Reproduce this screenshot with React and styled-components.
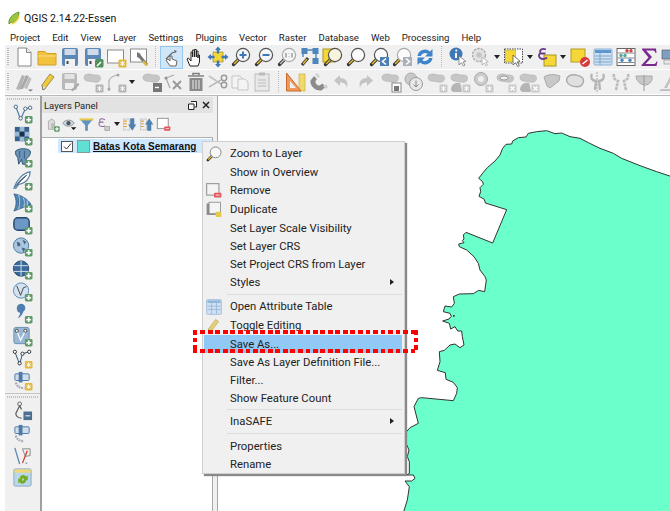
import React from 'react';
import styled, { createGlobalStyle } from 'styled-components';

const Global = createGlobalStyle`
  html, body { margin: 0; padding: 0; background: #fff; }
  body { font-family: Roboto, "Noto Sans", sans-serif; color: #222; }
`

/* ---------- small svg pieces ---------- */
const Glyph = styled.svg`
  display: block;
  flex: none;
`
const Ico = ({ size = 22, children }) => (
  <Glyph width={size} height={size} viewBox="0 0 22 22">{children}</Glyph>
)

const PlusBadge = () => (
  <g>
    <rect x="13.5" y="13.5" width="8" height="8" rx="1.5" fill="#5f9a68" />
    <path d="M17.5 15v5M15 17.5h5" stroke="#fff" strokeWidth="1.7" />
  </g>
)
const StarBadge = ({ c = '#e2b93b' }) => (
  <g>
    <rect x="13.5" y="13.5" width="8" height="8" rx="1.2" fill={c} />
    <path d="M17.5 15v5M15.3 16.2l4.4 2.6M15.3 18.8l4.4-2.6" stroke="#fff" strokeWidth="1" />
  </g>
)
const Lens = ({ children, ring = '#555', glass = '#f4f6f8', handle = '#e3b92f' }) => (
  <g>
    <path d="M8.5 13.5L3.5 18.5" stroke="#333" strokeWidth="3.2" strokeLinecap="round" />
    <path d="M8.5 13.5L4.5 17.5" stroke={handle} strokeWidth="1.6" strokeLinecap="round" />
    <circle cx="13" cy="9" r="6.6" fill={glass} stroke={ring} strokeWidth="1.2" />
    {children}
  </g>
)
const Blob = ({ c = '#c6c6c6' }) => (
  <path d="M2 6.5C2 3 7 2.5 10 3.5S18 3 18.5 6.5 16 12 12 11 2 11 2 6.5z" fill={c} stroke="#b0b0b0" strokeWidth=".6" />
)
const Floppy = ({ c = '#5c88b8', paper = '#cfdbe8' }) => (
  <g>
    <rect x="3" y="2" width="16" height="18" rx="2" fill={c} />
    <rect x="5.5" y="3" width="11" height="6" fill={paper} />
    <rect x="6" y="13" width="10" height="7" fill="#f2f2f2" />
    <rect x="7.5" y="15" width="2" height="3" fill="#444" />
  </g>
)
const DisabledFloppy = () => (
  <g>
    <rect x="3" y="2" width="15" height="17" rx="2" fill="#b9b9b9" />
    <rect x="5.5" y="3" width="10" height="5" fill="#e3e3e3" />
    <rect x="6" y="12" width="9" height="6" fill="#efefef" />
    <path d="M12 19l7-7 1.5 1.5-7 7z" fill="#a8a8a8" />
  </g>
)
const ArrowDot = ({ x, y, r }) => (
  <path d="M0-3.5L3 0H1.2V3.5H-1.2V0H-3z" transform={`translate(${x} ${y}) rotate(${r})`} fill="#3f78b5" />
)

const icons = {
  newFile: <><path d="M5 2h8.5L18 6.5V20H5z" fill="#fff" stroke="#888" /><path d="M13.5 2v4.5H18" fill="#eee" stroke="#888" /></>,
  open: <><path d="M2 5.500h7l2 2h9V19H2z" fill="#f2c23e" stroke="#cf9f23" /><path d="M2 10h18" stroke="#f8dd83" /></>,
  save: <Floppy />,
  saveAs: <><Floppy /><rect x="13" y="13" width="8.5" height="8.5" rx="1.5" fill="#4f8f58" /><path d="M15 20l4-4" stroke="#fff" strokeWidth="1.6" /></>,
  layout: <><rect x="2.5" y="4" width="16" height="13" fill="#fff" stroke="#8a8a8a" /><StarBadge /></>,
  manager: <><rect x="2.5" y="3" width="16" height="13" fill="#fff" stroke="#8a8a8a" /><path d="M9 6l3 1.5 1 2L20 18l-2 2-7-8-2-1z" fill="#777" /><path d="M15 15l4 4.5" stroke="#e3b92f" strokeWidth="2" /></>,
  panSelect: <><path d="M5 13l6-6 3-1" fill="none" stroke="#666" strokeWidth="1.2" /><path d="M13 4l3 1-2 2z" fill="#666" /><path d="M9 20l-4-6 2-1 2 2v-5h2v3l5 2-1 5z" fill="#fff" stroke="#666" /></>,
  hand: <path d="M6 20l-3-7 1.5-1 2.5 3V6h1.700v5-7h1.800v7-7.500h1.800V11V5h1.700v7-3h1.500v7l-1.500 4z" fill="#fff" stroke="#222" strokeWidth="1" />,
  panTo: <><rect x="6" y="6" width="10" height="10" fill="#f5d838" stroke="#8a7a20" strokeWidth=".6" /><ArrowDot x="11" y="4" r="0" /><ArrowDot x="11" y="18" r="180" /><ArrowDot x="4" y="11" r="270" /><ArrowDot x="18" y="11" r="90" /></>,
  zoomIn: <Lens><path d="M13 5.5v7M9.500 9h7" stroke="#3f78b5" strokeWidth="2" /></Lens>,
  zoomOut: <Lens><path d="M9.5 9h7" stroke="#3f78b5" strokeWidth="2" /></Lens>,
  zoomOne: <Lens ring="#aaa" handle="#bbb"><path d="M10 7v4.5M16 7v4.5M13 7.5v.5M13 10v.5" stroke="#888" strokeWidth="1.2" /></Lens>,
  zoomFull: <><rect x="2.5" y="2" width="6" height="6" fill="#4d86bd" /><rect x="13.5" y="2" width="6" height="6" fill="#4d86bd" /><rect x="13.5" y="12" width="6" height="6" fill="#4d86bd" /><path d="M7 4h8M17 7v6M4 7v4" stroke="#4d86bd" strokeWidth="1.4" /><path d="M9 12l-6 7" stroke="#333" strokeWidth="3" /><path d="M8 13l-4 5" stroke="#e3b92f" strokeWidth="1.4" /></>,
  zoomSel: <><rect x="1" y="3" width="12" height="13" fill="#f5d838" stroke="#a89520" /><Lens glass="#f7f3dc" /></>,
  zoomLayer: <Lens glass="#fbfbfb" />,
  zoomLast: <><Lens glass="#fbfbfb" /><rect x="12" y="11" width="9" height="9" fill="#4d7fb0" /><path d="M18 12.5l-3.5 3 3.5 3" fill="none" stroke="#fff" strokeWidth="1.6" /></>,
  zoomNext: <><Lens glass="#fbfbfb" ring="#aaa" /><rect x="12" y="11" width="9" height="9" fill="#aab1b8" /><path d="M15 12.5l3.5 3-3.5 3" fill="none" stroke="#fff" strokeWidth="1.6" /></>,
  refresh: <><path d="M3.5 10A7.500 7.500 0 0 1 16 5.500L18.500 3v7.500H11l2.700-2.700A4.500 4.500 0 0 0 6.800 10z" fill="#3d84cc" /><path d="M18.500 12A7.500 7.500 0 0 1 6 16.500L3.500 19v-7.500H11l-2.700 2.700A4.500 4.500 0 0 0 15.200 12z" fill="#3d84cc" /></>,
  identify: <><circle cx="9" cy="8" r="6.5" fill="#3f78b5" /><path d="M9 7v5" stroke="#fff" strokeWidth="2" /><circle cx="9.3" cy="4.6" r="1.1" fill="#fff" /><path d="M12 10v9l2.500-2.300 2 3.300 1.500-1-2-3 3-.5z" fill="#fff" stroke="#777" strokeWidth=".8" /></>,
  action: <><circle cx="9" cy="9" r="6.5" fill="#e3e3e3" stroke="#aaa" strokeWidth="1.4" strokeDasharray="2.5 1" /><circle cx="9" cy="9" r="2.8" fill="#c5c5c5" /><path d="M12 11v8l2.300-2 2 3 1.300-1-2-2.800 2.700-.5z" fill="#fff" stroke="#aaa" strokeWidth=".8" /></>,
  select: <><rect x="1.5" y="3" width="18" height="14" fill="#fff" stroke="#444" strokeDasharray="1.5 1" /><rect x="2.5" y="4" width="10" height="12" fill="#f5d838" stroke="#b29c20" strokeWidth=".5" /><path d="M10 9v10l2.500-2.300 2.200 3.800 1.600-1-2.200-3.500 3-.7z" fill="#fff" stroke="#555" strokeWidth=".8" /></>,
  expr: <><rect x="8" y="9" width="12" height="11" fill="#f5d838" stroke="#a89520" /><path d="M10 3.500C6 2 3 4 4.500 7 2 8.500 2.500 13 7 13c1.500 0 3-.5 4-1.500M4.500 7.500h5" fill="none" stroke="#6a3a90" strokeWidth="1.8" /></>,
  deselect: <><rect x="2" y="3" width="14" height="13" fill="#f5d838" stroke="#b29c20" /><circle cx="16" cy="16" r="5" fill="#d83a3a" /><path d="M13.500 18l5-4" stroke="#fff" strokeWidth="1.5" /></>,
  attrTable: <><rect x="2" y="3" width="18" height="16" rx="1" fill="#cfe0f2" stroke="#8bb0d3" /><rect x="3" y="4" width="16" height="3" fill="#5d97cf" /><path d="M3 10h16M3 13h16M3 16h16M8 7v12" stroke="#7da5cc" /></>,
  calc: <><rect x="2" y="2.5" width="18" height="17" fill="#fff" stroke="#666" /><path d="M2.500 7h17M2.500 12h17M2.500 16.500h17" stroke="#888" /><circle cx="12" cy="4.8" r="1.7" fill="#c44" /><circle cx="16" cy="4.8" r="1.7" fill="#c44" /><circle cx="6" cy="9.5" r="1.7" fill="#5a9" /><circle cx="10" cy="9.5" r="1.7" fill="#5a9" /><circle cx="15" cy="14.3" r="1.7" fill="#48c" /><circle cx="7" cy="14.3" r="1.7" fill="#48c" /></>,
  sigma: <path d="M4 2.500h14l.5 4.500h-1C17 5 16 4.500 14 4.500H8l6 6.500-6.500 7H15c2 0 3-.5 3.500-2.500h1L18.500 20H3.500v-1l7-7.500-6.500-8z" fill="#7a2a8c" />,
  ruler: <><rect x="1" y="4" width="20" height="9" fill="#7e9fc0" stroke="#555" strokeWidth=".6" /><rect x="3" y="14" width="16" height="4" fill="#e8e8e8" stroke="#888" strokeWidth=".6" /></>,

  pencils: <><path d="M3 18L9 4l3 1-5 14z" fill="#b3b3b3" /><path d="M7 18L13 4l3 1.500-6 12.500z" fill="#a8a8a8" /><path d="M11 17l5-11 2.500 1.500L14 18z" fill="#bdbdbd" /><path d="M15 18.500h5l-2.500 2z" fill="#777" /></>,
  pencil: <><path d="M7 19l-1-5L14 3l4 3-8.500 11z" fill="#efc93f" stroke="#8c7a30" strokeWidth=".8" /><path d="M6 14l1 5 3-2" fill="#e8e0c0" stroke="#555" strokeWidth=".6" /></>,
  saveGray: <DisabledFloppy />,
  addFeature: <><Blob /><StarBadge c="#b5b5b5" /></>,
  node: <><path d="M4 20V11q0-5 8-7" fill="none" stroke="#b0b0b0" strokeWidth="1.2" /><circle cx="4" cy="18" r="1.5" fill="#a5a5a5" /><circle cx="13" cy="4" r="1.5" fill="#a5a5a5" /><StarBadge c="#b5b5b5" /></>,
  moveFeature: <><Blob /><rect x="12" y="12" width="9" height="9" fill="#777" /><path d="M14 16.500h4" stroke="#fff" strokeWidth="1.4" /></>,
  nodeTool: <><path d="M3 7l8-3M3 7l4 10" fill="none" stroke="#aaa" strokeWidth="1.3" /><circle cx="3" cy="7" r="1.6" fill="#999" /><path d="M10 10l8 8M18 10l-8 8" stroke="#999" strokeWidth="2" /></>,
  trash: <><path d="M3 5h16M8 4V2.500h6V4" stroke="#808080" strokeWidth="1.6" fill="none" /><path d="M4.500 7h13v13h-13z" fill="#8a8a8a" /><path d="M8 9v9M11 9v9M14 9v9" stroke="#ddd" strokeWidth="1.2" /></>,
  cut: <><path d="M2 5l12 8M2 16l12-7" stroke="#aaa" strokeWidth="1.3" /><path d="M2 5l9 6" stroke="#c8c8c8" strokeWidth="2" /><circle cx="17" cy="7" r="2.7" fill="none" stroke="#999" strokeWidth="1.4" /><circle cx="17" cy="14" r="2.7" fill="none" stroke="#999" strokeWidth="1.4" /></>,
  copy: <><path d="M3 5h8l2 2v10H3z" fill="#f4f4f4" stroke="#c5c5c5" /><path d="M9 8h7l3 3v8H9z" fill="#f4f4f4" stroke="#c5c5c5" /></>,
  paste: <><rect x="4" y="3" width="14" height="17" fill="#e8e8e8" stroke="#bbb" /><rect x="8" y="1.5" width="6" height="3" fill="#bbb" /><path d="M7 9h8M7 12h8M7 15h8" stroke="#bbb" /></>,
  triangle: <><rect x="14" y="3" width="6" height="17" fill="#f0d96b" stroke="#c9a92f" strokeWidth=".6" /><path d="M1.500 2L16 20H1.500z" fill="#f0995a" stroke="#c76a2a" /><path d="M5 10v7h6z" fill="#f0f0f0" /></>,
  magnet: <><path d="M6 5L2.500 9.500c-1 5 5 11 11 10l4-3.500-3-3.500-3 2c-2 0-4.500-2-4-4.500l1.500-2z" fill="#8c8c8c" /><path d="M7 3.500l3 3.500 2-1.500-3-3.500zM18 13l-3 2 3 3 2-2z" fill="#d0d0d0" /></>,
  undo: <path d="M9 4L3 9.500 9 15v-3.500c4 0 6 1.500 7 5 1.500-5-.5-9.500-7-9.500z" fill="#c4c4c4" />,
  redo: <path d="M13 4l6 5.500L13 15v-3.500c-4 0-6 1.500-7 5-1.500-5 .5-9.500 7-9.500z" fill="#c4c4c4" />,
  blobDoc: <><Blob /><rect x="12" y="12" width="9" height="9" fill="#fff" stroke="#888" /><rect x="14" y="15" width="5" height="5" fill="#777" /></>,
  rotate: <><circle cx="8" cy="8" r="6" fill="#c9c9c9" stroke="#aaa" /><circle cx="13" cy="13" r="6.5" fill="#e8e8e8" stroke="#999" /><path d="M13 9.500v6M10.500 13.500l2.500 2.500 2.500-2.500" fill="none" stroke="#888" /></>,
  blobStar: <><Blob /><StarBadge c="#c9c9c9" /></>,
  twoBlobStar: <><Blob /><path d="M2 19c0-6 5-8 9-7l1 3 1 6H4z" fill="#b5b5b5" /><StarBadge c="#c9c9c9" /></>,
  ringStar: <><circle cx="9" cy="8" r="6.5" fill="#ccc" stroke="#aaa" /><circle cx="9" cy="8" r="3" fill="#eee" /><StarBadge c="#c9c9c9" /></>,
  blobHoleX: <><Blob /><ellipse cx="9" cy="7" rx="4" ry="2" fill="#f0f0f0" stroke="#999" /><rect x="13.500" y="13.500" width="8" height="8" fill="#ccc" /><path d="M15.500 15.500l4 4M19.500 15.500l-4 4" stroke="#fff" strokeWidth="1.4" /></>,
  twoBlobX: <><Blob /><path d="M2 19c0-6 5-8 9-7l1 3 1 6H4z" fill="#b5b5b5" /><rect x="13.500" y="13.500" width="8" height="8" fill="#ccc" /><path d="M15.500 15.500l4 4M19.500 15.500l-4 4" stroke="#fff" strokeWidth="1.4" /></>,
  part: <path d="M3 6c4-3 10-3 16-1l-1 5-9 7-3-2z" fill="#c8c8c8" stroke="#aaa" />,
  fill: <path d="M3 11c-2-6 5-8 9-7s9 2 7 8-13 4-16-1z" fill="#e0e0e0" stroke="#aaa" strokeWidth="1.4" />,
  split: <><path d="M5 3c-2 3 0 7 4 7l-1 9M16 3c2 3 0 7-4 7l1 9" fill="none" stroke="#b5b5b5" strokeWidth="2.4" /><path d="M10 1v20" stroke="#aaa" strokeDasharray="2 1" /></>,
  splitParts: <><path d="M4 3c-1 4 1 6 4 7l-2 9M18 3c1 4-1 6-4 7l2 9" fill="none" stroke="#bbb" strokeWidth="2.6" strokeDasharray="3 .8" /></>,
  merge: <><path d="M3 5h16c1 4-2 9-7 9s-9-5-9-9z" fill="#c8c8c8" stroke="#aaa" /><path d="M11 4v16" stroke="#999" /></>,
  mergeAttr: <path d="M5 18h14v2H3zM8 17l7-13 2 1-6 12z" fill="#c2c2c2" />,
}

const sideIcons = {
  vector: <><path d="M4 4l5 13 5-11 5-1" fill="none" stroke="#4a7aa8" strokeWidth="1.2" /><circle cx="4" cy="4" r="1.8" fill="#fff" stroke="#44617e" /><circle cx="9" cy="16" r="1.8" fill="#fff" stroke="#44617e" /><circle cx="14" cy="6" r="1.8" fill="#fff" stroke="#44617e" /><circle cx="19" cy="5" r="1.8" fill="#fff" stroke="#44617e" /><PlusBadge /></>,
  raster: <><rect x="3" y="2" width="15" height="15" fill="#35618d" /><path d="M8 2h5v5H8zM13 7h5v5h-5zM3 7h5v5H3zM8 12h5v5H8z" fill="#9bb7d1" /><path d="M8 7h5v5H8z" fill="#16324f" /><PlusBadge /></>,
  postgis: <><path d="M4 4c4-3 12-3 15 0 1 3-1 7-4 8l-1 6h-3l-1-5-3 5-1-7c-2-2-3-5-2-7z" fill="#6a93b8" stroke="#2e5170" /><path d="M8 4v7M13 4v8" stroke="#2e5170" strokeWidth=".8" /><PlusBadge /></>,
  feather: <><path d="M2 19C5 10 12 3 19 2c0 6-4 12-12 13l-3 4z" fill="#fff" stroke="#4f7aa5" strokeWidth="1.2" /><path d="M3 18C7 12 11 8 16 5" stroke="#4f7aa5" /><PlusBadge /></>,
  sail: <><path d="M2 2c8 1 15 6 18 11L2 20c3-6 3-12 0-18z" fill="#4f86b8" stroke="#2d5a85" strokeWidth=".8" /><path d="M7 3c1 4 1 10 0 15M12 6c1 3 1 7 .5 10M16 9v5" stroke="#d0e0ee" /><PlusBadge /></>,
  rect: <><rect x="2" y="4" width="16" height="13" rx="4" fill="#6d97c5" stroke="#24476c" strokeWidth="1.5" /><PlusBadge /></>,
  wms: <><circle cx="9.5" cy="10" r="8" fill="#a9c5df" stroke="#4f7aa5" /><path d="M5 6l3 1 1 3-3 1zM11 4l4 2-2 3zM10 12l4 1-2 4z" fill="#46627f" /><PlusBadge /></>,
  wcs: <><circle cx="9.5" cy="10" r="8" fill="#3a6a9a" stroke="#22486d" /><path d="M2 7h15M2 13h15M9.500 2v16" stroke="#d8e5f0" /><PlusBadge /></>,
  wfs: <><circle cx="9.5" cy="10" r="8" fill="#d3e2f0" stroke="#5c89b5" /><path d="M5 5l4 10 3-8 3-1" fill="none" stroke="#444" /><PlusBadge /></>,
  comma: <><path d="M5 5a4.500 4.500 0 1 1 7 4c-1 3-3 6-6 7 2-3 3-5 2-6-2 0-3-2-3-5z" fill="#4f7eb0" /><PlusBadge /></>,
  virtual: <><rect x="2" y="1.5" width="16" height="17" rx="2" fill="#9ab8d4" stroke="#6a8eb0" /><path d="M5 5l4 10 5-10" fill="none" stroke="#fff" strokeWidth="1.3" /><circle cx="5" cy="5" r="1.6" fill="#fff" stroke="#444" /><circle cx="14" cy="5" r="1.6" fill="#fff" stroke="#444" /><PlusBadge /></>,
  newLayer: <><path d="M3 4l5 13 3-11 7-2" fill="none" stroke="#44617e" strokeWidth="1.1" /><circle cx="3" cy="4" r="1.7" fill="#fff" stroke="#333" /><circle cx="8" cy="16" r="1.7" fill="#fff" stroke="#333" /><circle cx="11" cy="6" r="1.7" fill="#fff" stroke="#333" /><circle cx="18" cy="4" r="1.7" fill="#fff" stroke="#333" /><StarBadge /></>,
  oracle: <><rect x="3" y="4" width="15" height="7" rx="1" fill="#cfdeec" stroke="#4f7aa5" /><rect x="7" y="2" width="4" height="11" fill="#4f7aa5" /><path d="M4 13c1 4 4 6 9 6" fill="none" stroke="#aab" strokeWidth="2.4" strokeDasharray="2 .8" /><StarBadge /></>,
  pin: <><circle cx="8" cy="3" r="2" fill="none" stroke="#666" /><path d="M8 5l-4 8c0 3 3 5 6 5M8 5l2 4" fill="none" stroke="#555" strokeWidth="1.2" /><rect x="12" y="11" width="9" height="9" fill="#4a6f8f" /><path d="M14 15.500h5" stroke="#ddd" strokeWidth="1.3" /></>,
  join: <><rect x="3" y="4" width="15" height="7" rx="1" fill="#cfdeec" stroke="#4f7aa5" /><rect x="7" y="2" width="4" height="11" fill="#4f7aa5" /><path d="M4 13c1 4 4 6 8 6" fill="none" stroke="#aab" strokeWidth="2.4" strokeDasharray="2 .8" /></>,
  diagram: <><path d="M3 3l5 17" stroke="#5c89b5" strokeWidth="1.4" /><path d="M11 4h8v7l-5 1z" fill="#eee" stroke="#888" /><path d="M16 6l-5 13" stroke="#d33" strokeWidth="1.3" /><circle cx="15" cy="19" r="1" fill="#8ab" /></>,
  sync: <><rect x="2" y="2" width="18" height="18" rx="1.5" fill="#bcd7ec" stroke="#8ab" /><rect x="2.5" y="2.5" width="17" height="3.5" fill="#efd77a" /><path d="M8 11a4 4 0 0 1 7-1l1.500-1v5h-5l1.500-1.500c-1-1-2-1-3 0zM15 14a4 4 0 0 1-7 2l-1.500 1v-5h5L10 13.500c1 1 2 1 3 .5z" fill="#73ad22" /></>,
}

const panelIcons = {
  addGroup: <><path d="M5 18V6l5-3 4 3v12z" fill="#ddd" stroke="#999" /><path d="M9 9h4v8H9z" fill="#bbb" /><PlusBadge /></>,
  eye: <><path d="M1 9c4-6 13-6 17 0-4 6-13 6-17 0z" fill="#cfd5da" stroke="#777" /><circle cx="9.5" cy="9" r="3" fill="#456" /><path d="M13 15h8l-4 4z" fill="#111" /></>,
  funnel: <><path d="M1 3h20L13 12v8H9v-8z" fill="#5f93c2" /><rect x="1" y="2" width="20" height="3" fill="#e8c84a" /></>,
  epsilon: <><path d="M13 4C8 1 4 3 6 7c-3 2-2 7 3 7 2 0 3-.5 4-1.500M6 7.500h5" fill="none" stroke="#8a6a9a" strokeWidth="1.6" /><rect x="13" y="14" width="7" height="6" fill="#ccc" stroke="#999" /></>,
  expand: <><rect x="2" y="3" width="9" height="16" fill="#eee" stroke="#bbb" /><path d="M3 6h4M3 10h4M3 14h4" stroke="#e39b2e" strokeWidth="1.6" /><path d="M12 2h6v9h3l-6 9-6-9h3z" fill="#5082b0" /></>,
  collapse: <><rect x="2" y="3" width="9" height="16" fill="#eee" stroke="#bbb" /><path d="M3 6h4M3 10h4M3 14h4" stroke="#e39b2e" strokeWidth="1.6" /><path d="M12 20h6v-9h3L15 2 9 11h3z" fill="#5082b0" /></>,
  removeLayer: <><rect x="2" y="2" width="16" height="15" fill="#fff" stroke="#999" strokeWidth="1.5" /><rect x="12" y="14" width="9" height="6" rx="1" fill="#e2555b" /><path d="M14 17h5" stroke="#fff" /></>,
}

const menuIcons = {
  zoom: <Lens ring="#888" glass="#f7f7f7" />,
  remove: <><rect x="2" y="2" width="15" height="14" fill="#f4f4f4" stroke="#999" strokeWidth="1.4" /><rect x="11" y="13" width="9" height="6" rx="1" fill="#e2555b" /><path d="M13 16h5" stroke="#fff" /></>,
  duplicate: <><rect x="2" y="3" width="15" height="14" fill="#8a8a8a" /><rect x="5" y="1.5" width="14" height="14" fill="#f4f4f4" stroke="#888" /><rect x="13" y="13" width="7" height="6.5" rx="1" fill="#e6c84a" /></>,
  table: <><rect x="2" y="2" width="18" height="18" rx="1" fill="#cfe0f2" stroke="#9dbbd8" /><rect x="3" y="3" width="16" height="3" fill="#8fb5da" /><path d="M3 10h16M3 14h16M8 6v14M14 6v14" stroke="#96b6d6" /></>,
  pencil: <><path d="M5 19l-1-4L13 3l3.500 2.500L8 17z" fill="#e6cf6e" stroke="#a99a4f" strokeWidth=".7" /><path d="M4 15l1 4 3-2" fill="#7a7a70" /></>,
}

/* ---------- toolbars ---------- */
// '|n' separator n px wide, '_n' blank n px, 'v' dropdown, '*' pressed, '~' narrow button
const topRow = [
  'newFile', 'open', 'save', 'saveAs', 'layout', 'manager', '|10',
  '*panSelect', 'hand', 'panTo', 'zoomIn', 'zoomOut', 'zoomOne', 'zoomFull', 'zoomSel', 'zoomLayer', 'zoomLast', 'zoomNext', 'refresh', '|10',
  'identify', 'action', 'v', 'select', 'v', 'expr', 'v', 'deselect', 'attrTable', 'calc', 'sigma', 'ruler',
]
const editRow = [
  'pencils', 'pencil', 'saveGray', 'addFeature', 'node', 'v', '_4', '~moveFeature', '~nodeTool', '~trash', '~cut', '~copy', '~paste', '|11',
  'triangle', 'magnet', 'undo', 'redo', '_3', 'blobDoc', 'rotate', 'blobStar', 'twoBlobStar', 'ringStar', 'blobHoleX', 'twoBlobX', 'part', 'fill', 'split', 'splitParts', 'merge', 'mergeAttr',
]
const sideTop = ['vector', 'raster', 'postgis', 'feather', 'sail', 'rect', 'wms', 'wcs', 'wfs', 'comma', 'virtual', 'newLayer', 'oracle']
const sideBottom = ['pin', 'join', 'diagram', 'sync']
const panelRow = ['addGroup', 'eye', 'funnel', 'epsilon', 'v', 'expand', 'collapse', 'removeLayer']

const menu = [
  { label: 'Zoom to Layer', icon: 'zoom', tall: true },
  { label: 'Show in Overview' },
  { label: 'Remove', icon: 'remove', tall: true },
  { label: 'Duplicate', icon: 'duplicate', tall: true },
  { label: 'Set Layer Scale Visibility' },
  { label: 'Set Layer CRS' },
  { label: 'Set Project CRS from Layer' },
  { label: 'Styles', sub: true },
  { sep: 6 },
  { label: 'Open Attribute Table', icon: 'table', tall: true },
  { label: 'Toggle Editing', icon: 'pencil', tall: true },
  { label: 'Save As...', active: true },
  { label: 'Save As Layer Definition File...' },
  { label: 'Filter...' },
  { label: 'Show Feature Count' },
  { sep: 5 },
  { label: 'InaSAFE', sub: true },
  { sep: 7 },
  { label: 'Properties' },
  { label: 'Rename' },
]

const menuNames = ['Project', 'Edit', 'View', 'Layer', 'Settings', 'Plugins', 'Vector', 'Raster', 'Database', 'Web', 'Processing', 'Help']

function ToolRow({ items }) {
  return items.map((it, i) => {
    if (it[0] === '|') return <ToolSep key={i} $w={+it.slice(1)} />
    if (it[0] === '_') return <ToolGap key={i} $w={+it.slice(1)} />
    if (it === 'v') return <DropSlot key={i}><DropArrow /></DropSlot>
    const on = it[0] === '*'
    const narrow = it[0] === '~'
    const name = on || narrow ? it.slice(1) : it
    return <ToolBtn key={i} $on={on} $w={narrow ? 22 : 23}><Ico>{icons[name]}</Ico></ToolBtn>
  })
}

export default function App() {
  return (
    <Page>
      <Global />
      <TitleBar>
        <Glyph width="14" height="14" viewBox="0 0 14 14">
          <path d="M2 13C1 8 5 3 12 1c0 5-2 9-5 10-2 .5-3 0-5 2z" fill="#9ac53f" stroke="#4d7a1f" strokeWidth=".7" />
          <path d="M5 13c2-1 6-3 7-8" fill="none" stroke="#e8d23f" strokeWidth="1.4" />
        </Glyph>
        <TitleText>QGIS 2.14.22-Essen</TitleText>
      </TitleBar>
      <MenuBar>
        {menuNames.map(m => <MenuName key={m}>{m}</MenuName>)}
      </MenuBar>
      <Toolbar>
        <Grip />
        <ToolRow items={topRow} />
      </Toolbar>
      <Toolbar>
        <Grip />
        <ToolRow items={editRow} />
      </Toolbar>
      <Main>
        <SideBar>
          <SideGrip />
          {sideTop.map(n => <SideBtn key={n}><Ico size={21}>{sideIcons[n]}</Ico></SideBtn>)}
          <SideDivider />
          <SideGrip />
          {sideBottom.map(n => <SideBtn key={n}><Ico size={21}>{sideIcons[n]}</Ico></SideBtn>)}
        </SideBar>
        <Panel>
          <PanelTitle>
            <span>Layers Panel</span>
            <PanelActions>
              <Glyph width="9" height="9" viewBox="0 0 9 9">
                <path d="M3 .5h5.500V6H6.500M.5 3H6v5.500H.5z" fill="#fff" stroke="#222" />
              </Glyph>
              <Glyph width="8" height="8" viewBox="0 0 8 8">
                <path d="M1 1l6 6M7 1L1 7" stroke="#222" strokeWidth="1.5" />
              </Glyph>
            </PanelActions>
          </PanelTitle>
          <PanelTools>
            {panelRow.map((n, i) => n === 'v'
              ? <PanelDrop key={i}><DropArrow /></PanelDrop>
              : <PanelBtn key={i}><Ico size={15}>{panelIcons[n]}</Ico></PanelBtn>)}
          </PanelTools>
          <Tree>
            <LayerRow>
              <CheckBox>
                <Glyph width="9" height="9" viewBox="0 0 9 9">
                  <path d="M1 4.500l2.500 2.500L8 1.500" fill="none" stroke="#333" />
                </Glyph>
              </CheckBox>
              <Swatch />
              <LayerName>Batas Kota Semarang</LayerName>
            </LayerRow>
          </Tree>
        </Panel>
        <Splitter />
        <Canvas>
          <MapShape width="270" height="416" viewBox="0 0 810 1248">
            <path
              d="M830 250L770 230 720 212 665 190 640 175 600 160 565 143 540 130 510 125 485 114 465 116 440 107 410 110 385 115 378 126 355 128 338 138 335 147 318 148 308 160 300 180 285 198 262 218 250 232 236 250 248 260 250 268 240 278 242 290 237 304 253 313 256 324 320 344 278 444 198 412 190 420 192 432 187 437 192 443 176 447 178 455 200 465 222 485 235 505 240 525 255 545 259 555 254 590 236 586 220 596 178 597 160 605 163 625 155 636 135 633 130 650 150 655 154 664 147 672 128 678 148 685 152 702 165 695 173 708 185 708 187 725 192 750 180 758 165 747 150 750 133 766 118 770 120 800 112 826 136 833 138 853 160 862 172 878 170 895 160 917 65 908 55 910 42 935 55 985 30 998 18 1012 16 1040 27 1065 22 1085 28 1100 28 1135 20 1140 40 1140 45 1150 35 1158 15 1158 28 1175 22 1215 8 1260 830 1260Z"
              fill="#6bffcb"
              stroke="#333"
              strokeWidth="3"
            />
            <rect x="159" y="660" width="5" height="5" fill="#333" />
          </MapShape>
        </Canvas>
      </Main>

      <ContextMenu>
        {menu.map((m, i) => m.sep
          ? <MenuSep key={i} $h={m.sep} />
          : (
            <MenuItem key={i} $tall={m.tall} $active={m.active}>
              <MenuIconSlot>{m.icon && <Ico size={18}>{menuIcons[m.icon]}</Ico>}</MenuIconSlot>
              <span>{m.label}</span>
              {m.sub && <SubArrow />}
            </MenuItem>
          ))}
      </ContextMenu>
      <Callout />
    </Page>
  )
}

const Page = styled.div`
  position: relative;
  width: 670px;
  height: 511px;
  padding-left: 5px;
  box-sizing: border-box;
  display: flex;
  flex-direction: column;
  overflow: hidden;
  background: #fff;
`

const TitleBar = styled.div`
  height: 30px;
  display: flex;
  align-items: center;
  gap: 3px;
  padding: 6px 0 0 2px;
  box-sizing: border-box;
`

const TitleText = styled.span`
  font-size: 10.5px;
  color: #111;
`

const MenuBar = styled.div`
  height: 15px;
  display: flex;
  align-items: center;
  gap: 12px;
  padding-left: 5px;
`

const MenuName = styled.span`
  font-size: 9.6px;
  color: #222;
`

const Toolbar = styled.div`
  height: 24px;
  margin-bottom: 1px;
  display: flex;
  align-items: center;
  overflow: hidden;
  background: #f0f0f0;
`

const Grip = styled.div`
  width: 7.3px;
  height: 18px;
  flex: none;
  background: repeating-linear-gradient(to bottom, #c0c0c0 0 1px, transparent 1px 2px) 2px 0 / 2px 100% no-repeat;
`

const ToolBtn = styled.div`
  width: ${p => p.$w}px;
  height: 23px;
  flex: none;
  display: flex;
  align-items: center;
  justify-content: center;
  box-sizing: border-box;
  background: ${p => (p.$on ? '#cfe5f8' : 'transparent')};
  border: 1px solid ${p => (p.$on ? '#97c6ee' : 'transparent')};
`

const ToolSep = styled.div`
  width: ${p => p.$w}px;
  height: 22px;
  flex: none;
  background: repeating-linear-gradient(to bottom, #bbb 0 1px, transparent 1px 2px) center / 1px 100% no-repeat;
`

const ToolGap = styled.div`
  width: ${p => p.$w}px;
  flex: none;
`

const DropSlot = styled.div`
  width: 10px;
  flex: none;
  display: flex;
  justify-content: center;
`

const DropArrow = styled.div`
  width: 0;
  height: 0;
  border-left: 3.5px solid transparent;
  border-right: 3.5px solid transparent;
  border-top: 4px solid #222;
`

const Main = styled.div`
  flex: 1;
  min-height: 0;
  display: flex;
  border-top: 1px solid #b4b7bb;
`

const SideBar = styled.div`
  width: 35px;
  flex: none;
  background: #f0f0f0;
  border-right: 2px solid #a0a0a0;
  display: flex;
  flex-direction: column;
  align-items: center;
`

const SideGrip = styled.div`
  width: 31px;
  height: 2px;
  margin: 2px 0 2px;
  flex: none;
  background: repeating-linear-gradient(to right, #c0c0c0 0 1px, transparent 1px 2px);
`

const SideBtn = styled.div`
  height: 22.3px;
  width: 100%;
  flex: none;
  display: flex;
  align-items: center;
  justify-content: center;
`

const SideDivider = styled.div`
  width: 100%;
  height: 1px;
  margin-top: 1px;
  background: #c4c4c4;
`

const Panel = styled.div`
  width: 171px;
  flex: none;
  display: flex;
  flex-direction: column;
  background: #f0f0f0;
`

const PanelTitle = styled.div`
  height: 16px;
  margin-top: 1px;
  padding: 0 3px 0 2px;
  display: flex;
  align-items: center;
  justify-content: space-between;
  background: #e2e2e2;
  font-size: 9.5px;
  color: #222;
`

const PanelActions = styled.div`
  display: flex;
  align-items: center;
  gap: 5px;
`

const PanelTools = styled.div`
  height: 20px;
  margin-top: 1px;
  padding-left: 2px;
  display: flex;
  align-items: center;
`

const PanelBtn = styled.div`
  width: 17px;
  flex: none;
  display: flex;
  justify-content: center;
`

const PanelDrop = styled(PanelBtn)`
  width: 9px;
`

const Tree = styled.div`
  flex: 1;
  margin-top: 3px;
  padding-top: 1px;
  background: #fff;
  border-top: 1px solid #b0b0b0;
  border-right: 1px solid #a8a8a8;
`

const LayerRow = styled.div`
  height: 14px;
  margin-left: 16px;
  display: flex;
  align-items: center;
  background: #cde8ff;
`

const CheckBox = styled.div`
  width: 12px;
  height: 11px;
  margin-left: 3px;
  display: flex;
  align-items: center;
  justify-content: center;
  flex: none;
  background: #fff;
  border: 1px solid #555;
  box-sizing: border-box;
`

const Swatch = styled.div`
  width: 13px;
  height: 13px;
  margin-left: 4px;
  flex: none;
  background: #5fe0d3;
  border: 1px solid #8a9a98;
  box-sizing: border-box;
`

const LayerName = styled.span`
  margin-left: 3px;
  font-family: "Liberation Sans", sans-serif;
  font-weight: 700;
  font-size: 10px;
  color: #111;
  text-decoration: underline;
  white-space: nowrap;
`

const Splitter = styled.div`
  width: 4px;
  flex: none;
  background: #f0f0f0;
`

const Canvas = styled.div`
  flex: 1;
  position: relative;
  overflow: hidden;
  background: #fff;
  border-left: 1px solid #a8a8a8;
`

const MapShape = styled.svg`
  position: absolute;
  right: 0;
  top: -1px;
  display: block;
`

const ContextMenu = styled.div`
  position: absolute;
  left: 202px;
  top: 141px;
  width: 203px;
  height: 333px;
  padding: 2px 2px 1px 1px;
  box-sizing: border-box;
  background: #f0f0f0;
  border: 1px solid #cfcfcf;
  box-shadow: 2px 2px 1px #8a8a8a;
  font-size: 11.3px;
`

const MenuItem = styled.div`
  height: ${p => (p.$tall ? 19 : 18)}px;
  display: flex;
  align-items: center;
  color: #222;
  white-space: nowrap;
  background: ${p => (p.$active ? '#90c8f6' : 'transparent')};
`

const MenuIconSlot = styled.div`
  width: 26px;
  flex: none;
  display: flex;
  align-items: center;
  padding-left: 1px;
  box-sizing: border-box;
`

const SubArrow = styled.div`
  margin-left: auto;
  margin-right: 8px;
  width: 0;
  height: 0;
  border-top: 3px solid transparent;
  border-bottom: 3px solid transparent;
  border-left: 4px solid #222;
`

const MenuSep = styled.div`
  height: ${p => p.$h}px;
  margin-left: 23px;
  background: linear-gradient(#dcdcdc, #dcdcdc) center / 100% 1px no-repeat;
`

const dash = 'repeating-linear-gradient(to right, #f00 0 4.5px, transparent 4.5px 7.5px)'
const dashY = 'repeating-linear-gradient(to bottom, #f00 0 4.5px, transparent 4.5px 7.5px)'

const Callout = styled.div`
  position: absolute;
  left: 193px;
  top: 330px;
  width: 225px;
  height: 23px;
  background:
    ${dash} 0 0 / 100% 4px no-repeat,
    ${dash} 0 100% / 100% 4px no-repeat,
    ${dashY} 0 0 / 4px 100% no-repeat,
    ${dashY} 100% 0 / 4px 100% no-repeat;
`
